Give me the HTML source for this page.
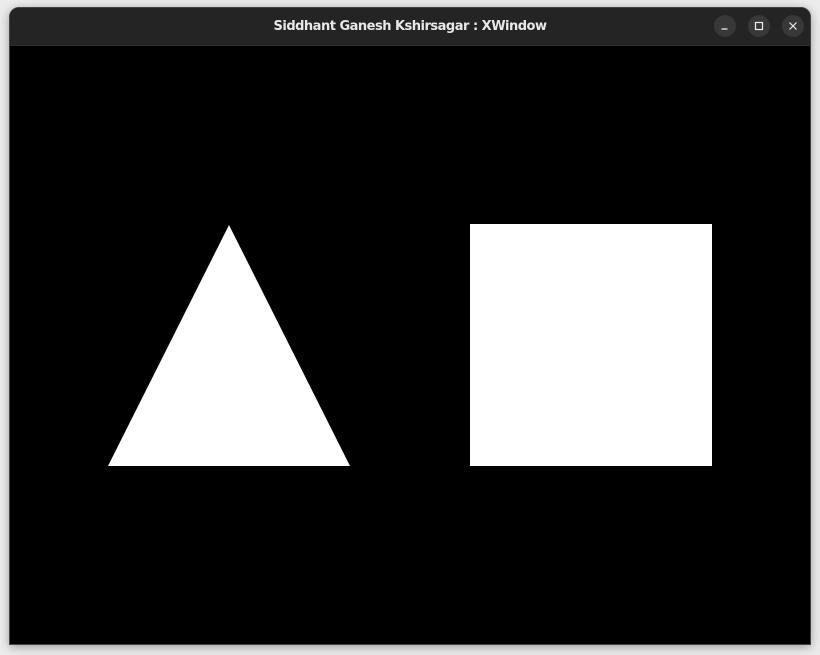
<!DOCTYPE html>
<html><head><style>
html,body{margin:0;padding:0;width:820px;height:655px;background:#ececec;overflow:hidden}
.win{position:absolute;left:9px;top:7px;width:802px;height:638px;background:#000;border-radius:10px 10px 0 0;box-shadow:0 2px 10px rgba(0,0,0,.35);overflow:hidden;border:1px solid #444;box-sizing:border-box}
.tb{position:absolute;left:0;top:0;width:100%;height:37px;background:#242424;border-bottom:1px solid #2e2e2e}
.t{position:absolute;left:0;right:0;top:11px;text-align:center;color:#e8e8e8;font:bold 13px "DejaVu Sans","Liberation Sans",sans-serif;letter-spacing:-0.5px}
.b{position:absolute;top:7px;width:22px;height:22px;border-radius:50%;background:#383838;color:#eee;font:12px "DejaVu Sans",sans-serif;text-align:center;line-height:22px}
</style></head><body>
<div class="win">
<div class="tb"><div class="t">Siddhant Ganesh Kshirsagar : XWindow</div>
<div class="b" style="left:704px"><svg width="22" height="22"><line x1="7.5" y1="14" x2="13.5" y2="14" stroke="#eee" stroke-width="1.2"/></svg></div>
<div class="b" style="left:738px"><svg width="22" height="22"><rect x="7.5" y="7.5" width="7" height="7" fill="none" stroke="#eee" stroke-width="1.2"/></svg></div>
<div class="b" style="left:772px"><svg width="22" height="22"><path d="M7.5 7.5L14.5 14.5M14.5 7.5L7.5 14.5" stroke="#eee" stroke-width="1.2"/></svg></div>
</div>
</div>
<svg style="position:absolute;left:0;top:0" width="820" height="655">
<polygon points="229,225 108,466 350,466" fill="#fff"/>
<rect x="470" y="224" width="242" height="242" fill="#fff"/>
</svg>
</body></html>
